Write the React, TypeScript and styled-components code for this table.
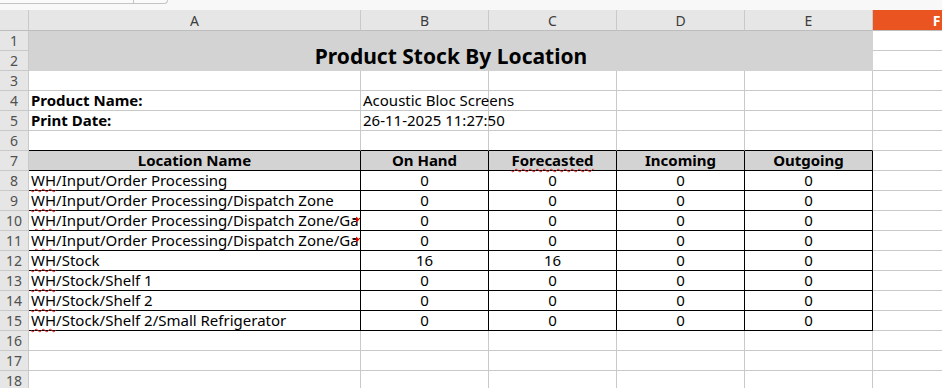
import React from "react";
import styled, { createGlobalStyle, css } from "styled-components";

const GlobalStyle = createGlobalStyle`
  html, body {
    margin: 0;
    padding: 0;
    background: #ffffff;
  }
  body {
    font-family: "Noto Sans", "Open Sans", sans-serif;
  }
`;

const grid = "#c9c9c9";
const headerBg = "#e6e6e6";
const fill = "#d3d3d3";

const Window = styled.div`
  width: 942px;
  height: 388px;
  overflow: hidden;
  background: #f8f8f8;
`;

const Toolbar = styled.div`
  height: 10px;
  display: flex;
  align-items: flex-start;
`;

const NameBox = styled.div`
  width: 133px;
  height: 3px;
  border-bottom: 1px solid #c4c4c4;
  border-right: 1px solid #c4c4c4;
  background: #fafafa;
`;

const NameArrow = styled.div`
  width: 33px;
  height: 3px;
  border-bottom: 1px solid #c4c4c4;
  border-right: 1px solid #c4c4c4;
  border-bottom-right-radius: 5px;
  background: #fafafa;
`;

const Sheet = styled.div`
  display: grid;
  grid-template-columns: 29px 332px 128px 128px 128px 128px 128px;
  grid-template-rows: 21px repeat(18, 20px);
  background: #ffffff;
  font-size: 15px;
  color: #000;
`;

const ColHead = styled.div<{ $active?: boolean }>`
  box-sizing: border-box;
  border-right: 1px solid ${grid};
  border-bottom: 1px solid #bdbdbd;
  background: ${headerBg};
  color: #3c3c3c;
  font-size: 14px;
  display: flex;
  align-items: center;
  justify-content: center;
  ${(p) =>
    p.$active &&
    css`
      background: #e95420;
      color: #ffffff;
      font-weight: 700;
      border-right-color: #e95420;
    `}
`;

const RowHead = styled.div`
  box-sizing: border-box;
  border-right: 1px solid ${grid};
  border-bottom: 1px solid ${grid};
  background: ${headerBg};
  color: #505050;
  font-size: 14px;
  display: flex;
  align-items: center;
  justify-content: center;
`;

const Corner = styled(RowHead)`
  border-bottom-color: #bdbdbd;
`;

const Title = styled.div`
  grid-column: 2 / 7;
  grid-row: span 2;
  box-sizing: border-box;
  background: ${fill};
  border-bottom: 1px solid ${fill};
  font-size: 21px;
  font-weight: 700;
  display: flex;
  align-items: flex-end;
  justify-content: center;
  padding-bottom: 1px;
  line-height: 26px;
`;

const Cell = styled.div<{
  $bold?: boolean;
  $center?: boolean;
  $boxed?: boolean;
  $above?: boolean;
  $head?: boolean;
  $clip?: boolean;
}>`
  position: relative;
  box-sizing: border-box;
  border-right: 1px solid ${grid};
  border-bottom: 1px solid ${grid};
  padding: 0 2px 0 2px;
  white-space: nowrap;
  line-height: 19px;
  font-weight: ${(p) => (p.$bold ? 700 : 400)};
  text-align: ${(p) => (p.$center ? "center" : "left")};
  overflow: ${(p) => (p.$clip ? "hidden" : "visible")};
  ${(p) =>
    p.$boxed &&
    css`
      border-right-color: #000;
      border-bottom-color: #000;
    `}
  ${(p) =>
    p.$above &&
    css`
      border-bottom-color: #000;
    `}
  ${(p) =>
    p.$head &&
    css`
      background: ${fill};
    `}
`;

const Spell = styled.span`
  text-decoration: underline wavy #e0201c;
  text-decoration-thickness: 1px;
  text-underline-offset: 2px;
  text-decoration-skip-ink: none;
`;

// little arrow LibreOffice shows when text is cut at the cell edge
const OverflowMark = styled.svg`
  position: absolute;
  right: 0;
  top: 5px;
`;

const Overflow = () => (
  <OverflowMark width="7" height="7" viewBox="0 0 7 7">
    <line x1="0" y1="3.5" x2="3" y2="3.5" stroke="#3a1010" strokeWidth="1" />
    <path d="M3 0.5 L6.5 3.5 L3 6.5 Z" fill="#e00000" />
  </OverflowMark>
);

const columns = ["A", "B", "C", "D", "E", "F"];

type Loc = { name: string; hand: number; forecast: number; clipped?: boolean };

const locations: Loc[] = [
  { name: "/Input/Order Processing", hand: 0, forecast: 0 },
  { name: "/Input/Order Processing/Dispatch Zone", hand: 0, forecast: 0 },
  { name: "/Input/Order Processing/Dispatch Zone/Gate 1", hand: 0, forecast: 0, clipped: true },
  { name: "/Input/Order Processing/Dispatch Zone/Gate 2", hand: 0, forecast: 0, clipped: true },
  { name: "/Stock", hand: 16, forecast: 16 },
  { name: "/Stock/Shelf 1", hand: 0, forecast: 0 },
  { name: "/Stock/Shelf 2", hand: 0, forecast: 0 },
  { name: "/Stock/Shelf 2/Small Refrigerator", hand: 0, forecast: 0 },
];

const Empty = ({ count }: { count: number }) => (
  <>
    {Array.from({ length: count }, (_, i) => (
      <Cell key={i} />
    ))}
  </>
);

export default function App() {
  let row = 0;
  const head = () => <RowHead>{++row}</RowHead>;

  return (
    <Window>
      <GlobalStyle />
      <Toolbar>
        <NameBox />
        <NameArrow />
      </Toolbar>
      <Sheet>
        <Corner />
        {columns.map((c) => (
          <ColHead key={c} $active={c === "F"}>
            {c}
          </ColHead>
        ))}

        {head()}
        <Title>Product Stock By Location</Title>
        <Cell />
        {head()}
        <Cell />

        {head()}
        <Empty count={6} />

        {head()}
        <Cell $bold>Product Name:</Cell>
        <Cell>Acoustic Bloc Screens</Cell>
        <Empty count={4} />

        {head()}
        <Cell $bold>Print Date:</Cell>
        <Cell>26-11-2025 11:27:50</Cell>
        <Empty count={4} />

        {head()}
        <Cell $above />
        <Cell $above />
        <Cell $above />
        <Cell $above />
        <Cell $above />
        <Cell />

        {head()}
        <Cell $boxed $head $bold $center>Location Name</Cell>
        <Cell $boxed $head $bold $center>On Hand</Cell>
        <Cell $boxed $head $bold $center>
          <Spell>Forecasted</Spell>
        </Cell>
        <Cell $boxed $head $bold $center>Incoming</Cell>
        <Cell $boxed $head $bold $center>Outgoing</Cell>
        <Cell />

        {locations.map((l) => (
          <React.Fragment key={l.name}>
            {head()}
            <Cell $boxed $clip={l.clipped}>
              <Spell>WH</Spell>
              {l.name}
              {l.clipped && <Overflow />}
            </Cell>
            <Cell $boxed $center>{l.hand}</Cell>
            <Cell $boxed $center>{l.forecast}</Cell>
            <Cell $boxed $center>0</Cell>
            <Cell $boxed $center>0</Cell>
            <Cell />
          </React.Fragment>
        ))}

        {head()}
        <Empty count={6} />
        {head()}
        <Empty count={6} />
        {head()}
        <Empty count={6} />
      </Sheet>
    </Window>
  );
}
